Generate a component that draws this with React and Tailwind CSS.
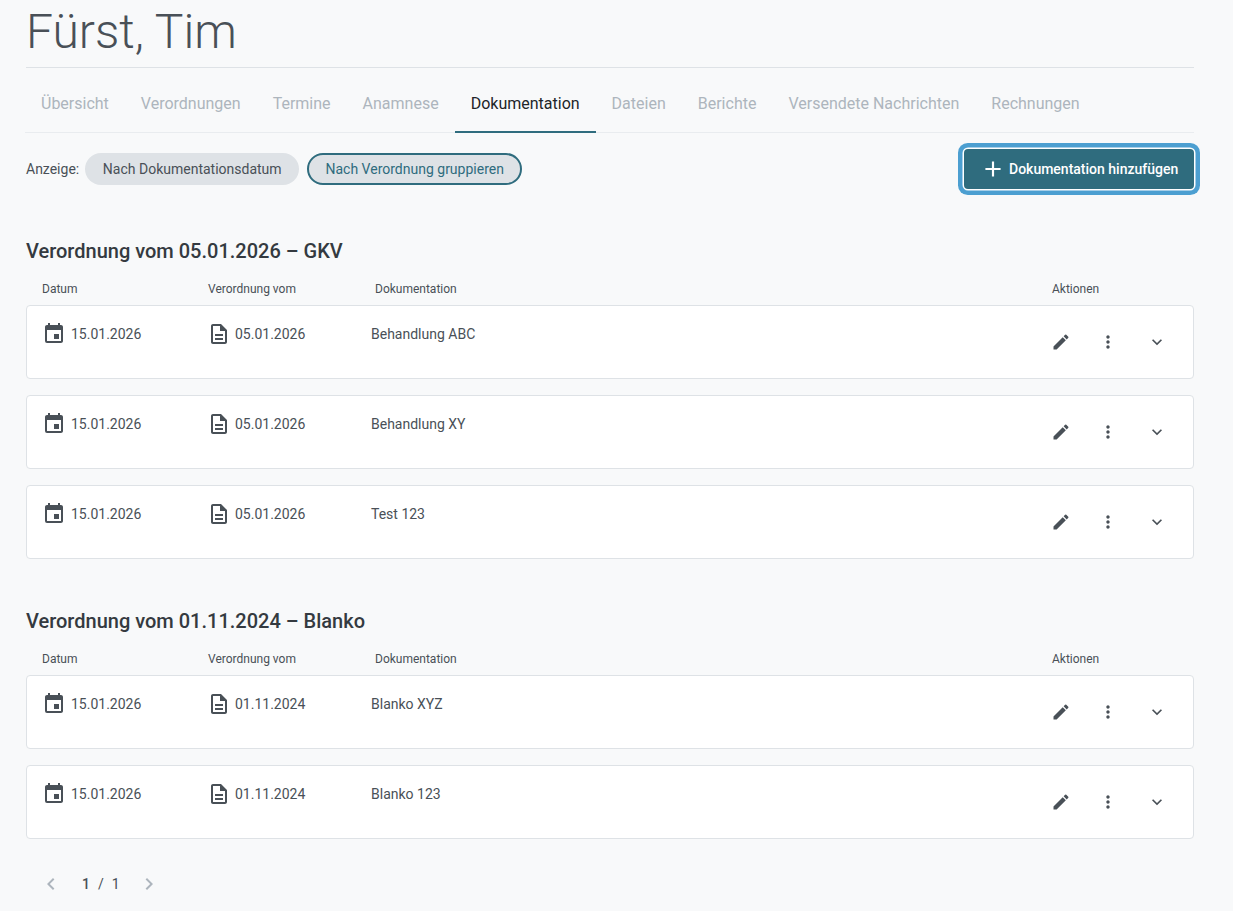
import { MdEvent, MdEdit, MdMoreVert, MdExpandMore, MdAdd, MdChevronLeft, MdChevronRight } from 'react-icons/md';

const tabs = ['Übersicht', 'Verordnungen', 'Termine', 'Anamnese', 'Dokumentation', 'Dateien', 'Berichte', 'Versendete Nachrichten', 'Rechnungen'];

const groups = [
  {
    title: 'Verordnung vom 05.01.2026 – GKV',
    date: '05.01.2026',
    rows: ['Behandlung ABC', 'Behandlung XY', 'Test 123'],
  },
  {
    title: 'Verordnung vom 01.11.2024 – Blanko',
    date: '01.11.2024',
    rows: ['Blanko XYZ', 'Blanko 123'],
  },
];

// outline document with a solid corner fold and two text lines
function DocIcon() {
  return (
    <svg width="24" height="24" viewBox="0 0 24 24" fill="currentColor">
      <path d="M8 16h8v2H8zm0-4h8v2H8zm6-10H6c-1.1 0-2 .9-2 2v16c0 1.1.89 2 1.99 2H18c1.1 0 2-.9 2-2V8l-6-6zm4 18H6V4h7v5h5v11z" />
      <path d="M14 3.5 18.5 8H14z" />
    </svg>
  );
}

function Row({ date, name }) {
  return (
    <div className="flex h-[74px] rounded border border-[#dee2e6] bg-white text-sm text-[#495057]">
      <div className="ml-4 mt-4 flex h-6 w-[164px] shrink-0 items-center gap-[5px]">
        <MdEvent size={24} className="-ml-px" />
        <span>15.01.2026</span>
      </div>
      <div className="mt-4 flex h-6 w-[164px] shrink-0 items-center gap-1">
        <DocIcon />
        <span>{date}</span>
      </div>
      <div className="mt-4 flex h-6 flex-1 items-center">{name}</div>
      <div className="mr-3 mt-3 flex">
        <button className="flex h-12 w-12 items-center justify-center"><MdEdit size={20} /></button>
        <button className="flex h-12 w-12 items-center justify-center pr-0.5"><MdMoreVert size={20} /></button>
        <button className="flex h-12 w-12 items-center justify-center"><MdExpandMore size={20} /></button>
      </div>
    </div>
  );
}

export default function App() {
  return (
    <div className="h-[911px] overflow-hidden bg-[#f8f9fa] pl-[26px] pr-[39px] font-['Roboto',sans-serif]">
      <h1 className="h-[68px] border-b border-[#dee2e6] pt-1 text-[48px] leading-[56px] font-light text-[#495057]">Fürst, Tim</h1>

      {/* Tabs */}
      <div className="-ml-px flex h-[65px] border-b border-[#e9ecef]">
        {tabs.map((tab) => (
          <div
            key={tab}
            className={`-mb-px flex h-[65px] items-center border-b-2 px-4 pt-2 text-base ${
              tab === 'Dokumentation' ? 'border-[#2f6c7e] text-[#212529]' : 'border-transparent text-[#adb5bd]'
            }`}
          >
            {tab}
          </div>
        ))}
      </div>

      {/* Filter + add button */}
      <div className="mt-5 flex h-8 items-center text-sm text-[#495057]">
        <span>Anzeige:</span>
        <div className="ml-[6px] flex h-8 w-[214px] items-center justify-center rounded-full bg-[#dee2e6]">Nach Dokumentationsdatum</div>
        <div className="ml-2 flex h-8 w-[215px] items-center justify-center rounded-full border-2 border-[#2f6c7e] bg-[#dee2e6] text-[#2f6c7e]">Nach Verordnung gruppieren</div>
        <button className="ml-auto flex h-10 w-[230px] items-center gap-[3px] rounded bg-[#2f6c7e] pl-4 text-sm font-medium text-white shadow-[0_0_0_1.5px_#ffffff,0_0_0_6px_#4c9fd1]">
          <MdAdd size={26} />
          Dokumentation hinzufügen
        </button>
      </div>

      {groups.map((group, i) => (
        <section key={group.title} className={i === 0 ? 'mt-[52px]' : 'mt-12'}>
          <h2 className="h-7 text-xl leading-7 font-medium text-[#343a40]">{group.title}</h2>
          <div className="mt-3.5 flex h-5 items-center pl-4 text-xs text-[#495057]">
            <span className="w-[166px]">Datum</span>
            <span className="w-[167px]">Verordnung vom</span>
            <span className="flex-1">Dokumentation</span>
            <span className="w-[142px]">Aktionen</span>
          </div>
          <div className="mt-1.5 flex flex-col gap-4">
            {group.rows.map((name) => (
              <Row key={name} date={group.date} name={name} />
            ))}
          </div>
        </section>
      ))}

      {/* Pagination */}
      <div className="mt-[33px] flex h-6 items-center pl-[13px] text-sm text-[#495057]">
        <MdChevronLeft size={24} className="text-[#adb5bd]" />
        <span className="ml-[19px] font-medium">1</span>
        <span className="mx-2">/</span>
        <span>1</span>
        <MdChevronRight size={24} className="ml-[17px] text-[#adb5bd]" />
      </div>
    </div>
  );
}
